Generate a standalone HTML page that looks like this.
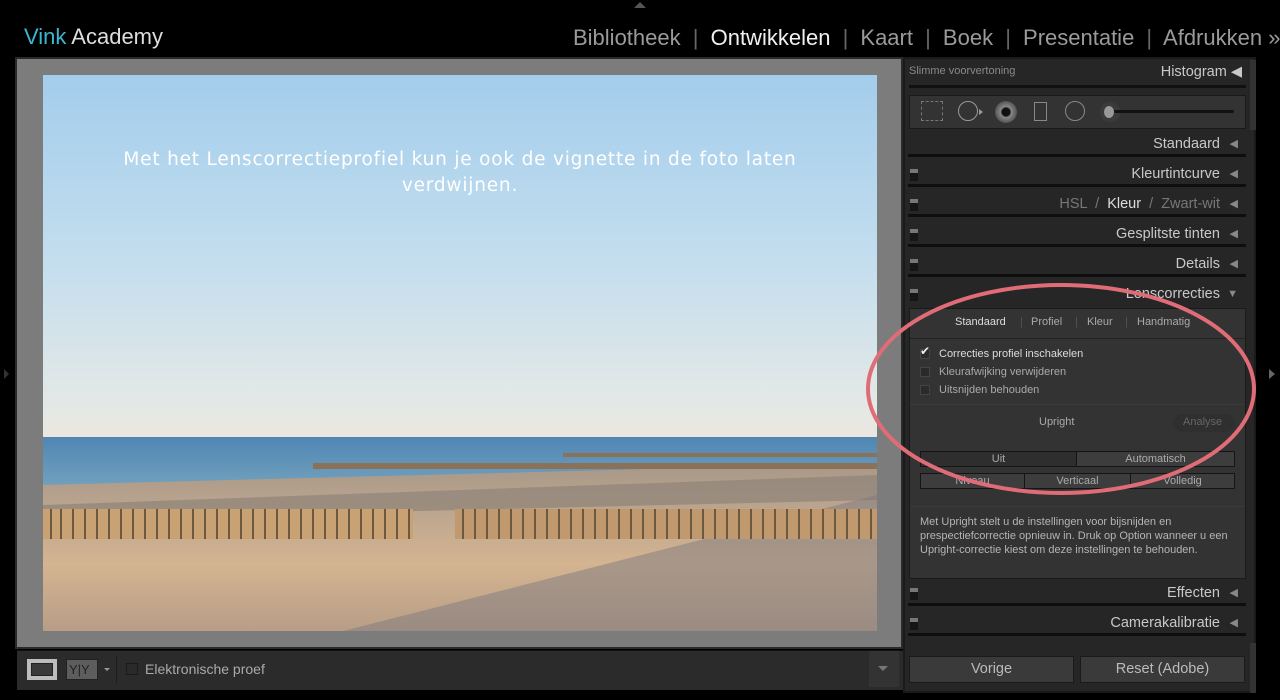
<!DOCTYPE html>
<html><head><meta charset="utf-8"><style>
*{margin:0;padding:0;box-sizing:border-box}
body{width:1280px;height:700px;background:#000;position:relative;overflow:hidden;font-family:"Liberation Sans","DejaVu Sans",sans-serif;color:#ccc}
.a{position:absolute}
.nav{top:25px;font-size:22px;color:#9a9a9a;white-space:nowrap}
.hdr{position:absolute;left:908px;width:338px;height:24px;font-size:14.5px;color:#c8c8c8;text-align:right;padding-right:26px;line-height:22px;border-bottom:3px solid #0e0e0e}
.hdr .tri{position:absolute;right:8px;top:0;color:#888;font-size:11px}
.sw{position:absolute;left:2px;top:6px;width:8px;height:12px;background:#161616;border-top:4px solid #777}
.cb{position:absolute;width:10px;height:10px;background:#2a2a2a;border:1px solid #444}
.lbl{position:absolute;font-size:11px;color:#c0c0c0}
.btn{position:absolute;height:16px;border:1px solid #151515;background:#3d3d3d;font-size:11px;color:#aaa;text-align:center;line-height:14px}
</style></head><body>
<div class="a" style="left:24px;top:24px;font-size:22px;color:#ddd"><span style="color:#3cb6cf">Vink</span> Academy</div>
<div class="a" style="left:634px;top:2px;width:0;height:0;border-left:6px solid transparent;border-right:6px solid transparent;border-bottom:6px solid #555"></div>
<div class="a nav" style="left:573px">Bibliotheek <span style="color:#666;margin:0 6px">|</span> <span style="color:#f0f0f0">Ontwikkelen</span> <span style="color:#666;margin:0 6px">|</span> Kaart <span style="color:#666;margin:0 6px">|</span> Boek <span style="color:#666;margin:0 6px">|</span> Presentatie <span style="color:#666;margin:0 6px">|</span> Afdrukken »</div>

<div class="a" style="left:15px;top:57px;width:888px;height:592px;border:2px solid #2a2a2a;background:#7c7c7c"></div>
<svg class="a" style="left:43px;top:75px" width="834" height="556" viewBox="0 0 834 556">
<defs>
<linearGradient id="sky" x1="0" y1="0" x2="0" y2="1"><stop offset="0" stop-color="#a3cdec"/><stop offset="0.55" stop-color="#c6dfee"/><stop offset="0.9" stop-color="#e3e8e6"/><stop offset="1" stop-color="#ebe7df"/></linearGradient>
<linearGradient id="sea" x1="0" y1="0" x2="0" y2="1"><stop offset="0" stop-color="#4f86b3"/><stop offset="1" stop-color="#7aa6c0"/></linearGradient>
<linearGradient id="sand" x1="0" y1="0" x2="0" y2="1"><stop offset="0" stop-color="#a89888"/><stop offset="0.3" stop-color="#bda68f"/><stop offset="0.6" stop-color="#d4b491"/><stop offset="1" stop-color="#b89e86"/></linearGradient>
</defs>
<rect width="834" height="362" fill="url(#sky)"/>
<rect y="362" width="834" height="60" fill="url(#sea)"/>
<path d="M0 410 L834 388 L834 556 L0 556Z" fill="url(#sand)"/>
<path d="M0 430 L834 400 L834 425 L0 445Z" fill="#8e8378" opacity="0.7"/>
<path d="M300 556 L834 420 L834 556Z" fill="#7d7a80" opacity="0.5"/>
<rect x="270" y="388" width="564" height="6" fill="#8a7158"/>
<rect x="520" y="378" width="314" height="4" fill="#8a7158"/>
<rect x="0" y="434" width="370" height="30" fill="#c8a273"/>
<rect x="412" y="434" width="422" height="30" fill="#c09a6e"/>
<g stroke="#6d5840" stroke-width="2">
<path d="M8 434v30M18 434v30M30 434v30M42 434v30M54 434v30M66 434v30M78 434v30M90 434v30M102 434v30M114 434v30M126 434v30M138 434v30M150 434v30M162 434v30M174 434v30M186 434v30M198 434v30M210 434v30M222 434v30M234 434v30M246 434v30M258 434v30M270 434v30M282 434v30M294 434v30M306 434v30M318 434v30M330 434v30M342 434v30M354 434v30M366 434v30"/>
<path d="M420 434v30M432 434v30M444 434v30M456 434v30M468 434v30M480 434v30M492 434v30M504 434v30M516 434v30M528 434v30M540 434v30M552 434v30M564 434v30M576 434v30M588 434v30M600 434v30M612 434v30M624 434v30M636 434v30M648 434v30M660 434v30M672 434v30M684 434v30M696 434v30M708 434v30M720 434v30M732 434v30M744 434v30M756 434v30M768 434v30M780 434v30M792 434v30M804 434v30M816 434v30M828 434v30"/>
</g>
<text x="417" y="90" text-anchor="middle" font-family="DejaVu Sans" font-size="18.5" letter-spacing="0.8" fill="#fff">Met het Lenscorrectieprofiel kun je ook de vignette in de foto laten</text>
<text x="417" y="116" text-anchor="middle" font-family="DejaVu Sans" font-size="18.5" letter-spacing="0.8" fill="#fff">verdwijnen.</text>
</svg>

<div class="a" style="left:17px;top:650px;width:886px;height:40px;background:#2b2b2b;border-top:1px solid #111"></div>
<div class="a" style="left:27px;top:659px;width:30px;height:21px;background:#bdbdbd;border:4px solid #bdbdbd"><div style="width:100%;height:100%;background:#3a3a3a;border:1px solid #222"></div></div>
<div class="a" style="left:66px;top:659px;width:32px;height:21px;background:#5d5d5d;border:1px solid #222;font-size:13px;color:#222;line-height:19px;padding-left:2px">Y|Y</div>
<div class="a" style="left:104px;top:668px;border-left:3px solid transparent;border-right:3px solid transparent;border-top:3px solid #999"></div>
<div class="a" style="left:116px;top:656px;width:1px;height:28px;background:#1c1c1c"></div>
<div class="a" style="left:126px;top:663px;width:12px;height:12px;background:#2a2a2a;border:1px solid #1a1a1a"></div>
<div class="a" style="left:145px;top:661px;font-size:14px;color:#aaa">Elektronische proef</div>
<div class="a" style="left:869px;top:651px;width:30px;height:36px;background:#333"></div>
<div class="a" style="left:878px;top:666px;border-left:5px solid transparent;border-right:5px solid transparent;border-top:5px solid #777"></div>

<div class="a" style="left:903px;top:57px;width:353px;height:636px;background:#262626;border:2px solid #1a1a1a"></div>
<div class="a" style="left:1250px;top:60px;width:6px;height:70px;background:#333"></div>
<div class="a" style="left:1250px;top:643px;width:6px;height:50px;background:#333"></div>
<div class="a" style="left:909px;top:65px;font-size:11px;color:#8a8a8a">Slimme voorvertoning</div>
<div class="a" style="left:1100px;top:64px;width:142px;text-align:right;font-size:14.5px;color:#c8c8c8">Histogram ◀</div>
<div class="a" style="left:909px;top:85px;width:337px;height:3px;background:#111"></div>
<div class="a" style="left:909px;top:95px;width:337px;height:34px;background:#333;border:1px solid #1a1a1a"></div>
<div class="a" style="left:921px;top:101px;width:22px;height:20px;border:1px dashed #777"></div>
<div class="a" style="left:958px;top:101px;width:20px;height:20px;border:1px solid #999;border-radius:50%"></div>
<div class="a" style="left:979px;top:109px;border-top:3px solid transparent;border-bottom:3px solid transparent;border-left:4px solid #999"></div>
<div class="a" style="left:995px;top:101px;width:22px;height:22px;border-radius:50%;background:radial-gradient(#111 25%,#888 35%,#555 70%)"></div>
<div class="a" style="left:1034px;top:102px;width:13px;height:19px;border:1px solid #888"></div>
<div class="a" style="left:1065px;top:101px;width:20px;height:20px;border:1px solid #888;border-radius:50%"></div>
<div class="a" style="left:1100px;top:102px;width:20px;height:20px;background:#3a3a3a;border-radius:50%"></div>
<div class="a" style="left:1104px;top:106px;width:10px;height:12px;background:#999;border-radius:50%"></div>
<div class="a" style="left:1114px;top:110px;width:120px;height:3px;background:#111;border-radius:2px"></div>

<div class="hdr" style="top:133px">Standaard<span class="tri">◀</span></div>
<div class="hdr" style="top:163px"><span class="sw"></span>Kleurtintcurve<span class="tri">◀</span></div>
<div class="hdr" style="top:193px;color:#777"><span class="sw"></span>HSL &nbsp;/&nbsp; <b style="color:#ddd;font-weight:normal">Kleur</b> &nbsp;/&nbsp; Zwart-wit<span class="tri">◀</span></div>
<div class="hdr" style="top:223px"><span class="sw"></span>Gesplitste tinten<span class="tri">◀</span></div>
<div class="hdr" style="top:253px"><span class="sw"></span>Details<span class="tri">◀</span></div>
<div class="hdr" style="top:283px;border-bottom:none"><span class="sw"></span>Lenscorrecties<span class="tri">▼</span></div>

<div class="a" style="left:909px;top:308px;width:337px;height:271px;background:#333;border:1px solid #1a1a1a"></div>
<div class="a" style="left:910px;top:338px;width:335px;height:1px;background:#222"></div>
<div class="lbl" style="left:955px;top:316px;color:#ddd">Standaard</div>
<div class="lbl" style="left:1020px;top:316px;color:#555">|</div>
<div class="lbl" style="left:1031px;top:316px;color:#aaa">Profiel</div>
<div class="lbl" style="left:1075px;top:316px;color:#555">|</div>
<div class="lbl" style="left:1087px;top:316px;color:#aaa">Kleur</div>
<div class="lbl" style="left:1125px;top:316px;color:#555">|</div>
<div class="lbl" style="left:1137px;top:316px;color:#aaa">Handmatig</div>
<div class="cb" style="left:920px;top:349px"></div><div class="lbl" style="left:920px;top:344px;color:#eee;font-size:12px">✔</div>
<div class="lbl" style="left:939px;top:348px;color:#ddd">Correcties profiel inschakelen</div>
<div class="cb" style="left:920px;top:367px"></div><div class="lbl" style="left:939px;top:366px;color:#aaa">Kleurafwijking verwijderen</div>
<div class="cb" style="left:920px;top:385px"></div><div class="lbl" style="left:939px;top:384px;color:#aaa">Uitsnijden behouden</div>
<div class="a" style="left:910px;top:404px;width:335px;height:1px;background:#3a3a3a"></div>
<div class="lbl" style="left:1039px;top:416px;color:#aaa">Upright</div>
<div class="a" style="left:1173px;top:414px;width:62px;height:18px;border-radius:9px;background:#2f2f2f"></div>
<div class="lbl" style="left:1183px;top:416px;color:#666">Analyse</div>
<div class="btn" style="left:920px;top:451px;width:157px;background:#2e2e2e">Uit</div>
<div class="btn" style="left:1076px;top:451px;width:159px">Automatisch</div>
<div class="btn" style="left:920px;top:473px;width:105px">Niveau</div>
<div class="btn" style="left:1024px;top:473px;width:107px">Verticaal</div>
<div class="btn" style="left:1130px;top:473px;width:105px">Volledig</div>
<div class="a" style="left:910px;top:506px;width:335px;height:1px;background:#3a3a3a"></div>
<div class="lbl" style="left:920px;top:515px;width:320px;line-height:14px;color:#b5b5b5">Met Upright stelt u de instellingen voor bijsnijden en prespectiefcorrectie opnieuw in. Druk op Option wanneer u een Upright-correctie kiest om deze instellingen te behouden.</div>

<div class="hdr" style="top:582px"><span class="sw"></span>Effecten<span class="tri">◀</span></div>
<div class="hdr" style="top:612px"><span class="sw"></span>Camerakalibratie<span class="tri">◀</span></div>
<div class="a" style="left:909px;top:656px;width:165px;height:27px;background:#3a3a3a;border:1px solid #1a1a1a;text-align:center;line-height:25px;font-size:14.5px;color:#bbb">Vorige</div>
<div class="a" style="left:1080px;top:656px;width:165px;height:27px;background:#3a3a3a;border:1px solid #1a1a1a;text-align:center;line-height:25px;font-size:14.5px;color:#bbb">Reset (Adobe)</div>
<div class="a" style="left:1269px;top:369px;border-top:5px solid transparent;border-bottom:5px solid transparent;border-left:6px solid #666"></div>
<div class="a" style="left:4px;top:369px;border-top:5px solid transparent;border-bottom:5px solid transparent;border-left:5px solid #333"></div>

<svg class="a" style="left:0;top:0" width="1280" height="700"><ellipse cx="1061" cy="389" rx="193" ry="104" fill="none" stroke="#e06c78" stroke-width="4"/></svg>
</body></html>
